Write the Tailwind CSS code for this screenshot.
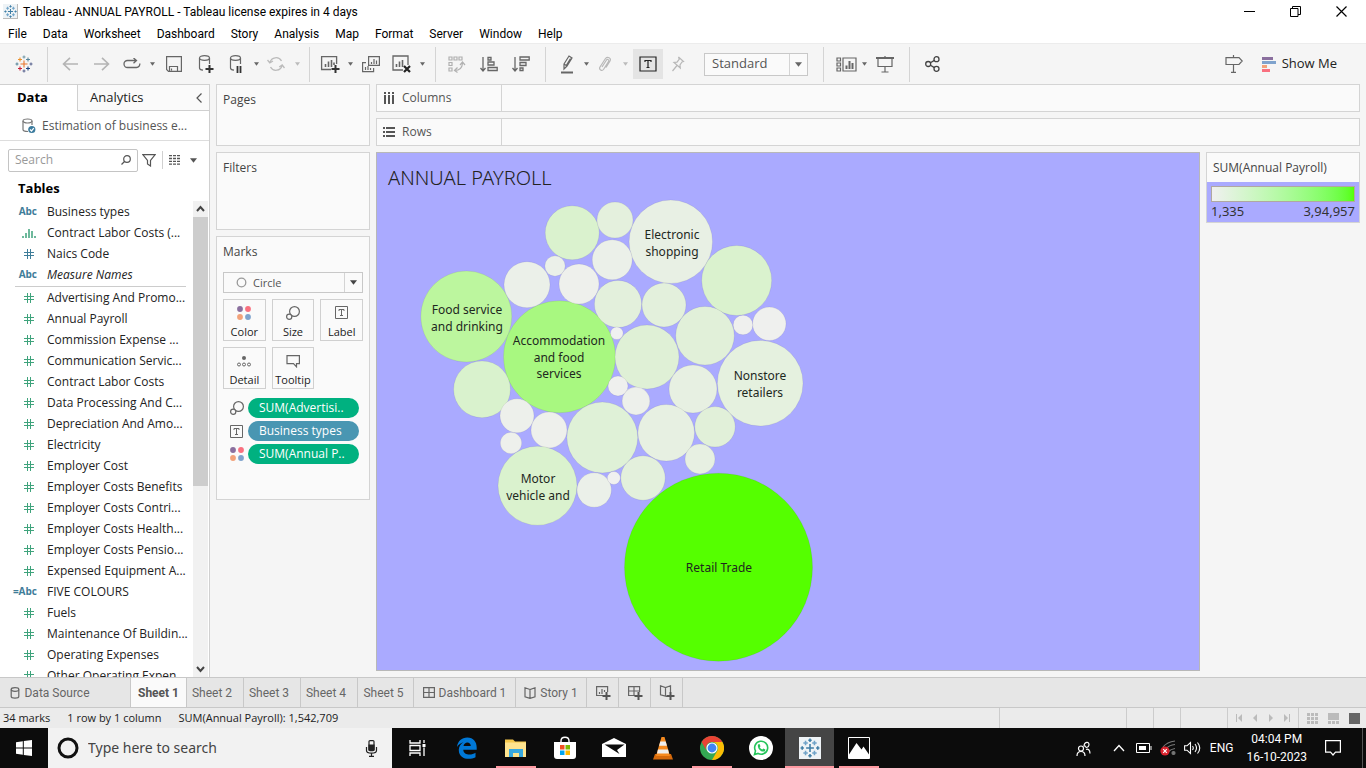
<!DOCTYPE html>
<html lang="en">
<head>
<meta charset="utf-8">
<title>Tableau - ANNUAL PAYROLL</title>
<script src="https://cdn.jsdelivr.net/npm/@tailwindcss/browser@4"></script>
</head>
<body class="flex h-screen flex-col overflow-hidden bg-[#f5f5f5] font-['Open_Sans',sans-serif] text-xs text-[#333]">

<svg class="hidden" aria-hidden="true">
  <symbol id="caret" viewBox="0 0 6 4"><path d="M0 0h6L3 4z" fill="currentColor"/></symbol>
  <symbol id="cross" viewBox="0 0 18 18"><g fill="none" stroke-width="1.1">
    <path stroke="#e8762c" d="M9 5.5v7M5.5 9h7"/><path stroke="#eb912b" d="M5 2.5v4M3 4.5h4"/><path stroke="#59879b" d="M13 2.5v4M11 4.5h4"/><path stroke="#c72037" d="M5 11.5v4M3 13.5h4"/><path stroke="#1f447e" d="M13 11.5v4M11 13.5h4"/><path stroke="#7199a6" d="M9 .5v3M7.5 2h3"/><path stroke="#5b6591" d="M9 14.5v3M7.5 16h3M16 7.5v3M14.5 9h3"/><path stroke="#59879b" d="M2 7.5v3M.5 9h3"/></g></symbol>
  <symbol id="crossblue" viewBox="0 0 18 18"><g fill="none" stroke="#3f7ea6" stroke-width="1.4">
    <path d="M9 5.5v7M5.5 9h7"/><path stroke="#6fa3c8" d="M5 2.5v4M3 4.5h4M13 2.5v4M11 4.5h4M5 11.5v4M3 13.5h4M13 11.5v4M11 13.5h4"/><path d="M9 .5v3M7.5 2h3M9 14.5v3M7.5 16h3M16 7.5v3M14.5 9h3M2 7.5v3M.5 9h3"/></g></symbol>
  <symbol id="dots4" viewBox="0 0 14 14"><circle cx="3" cy="3" r="2.9" fill="#8a6f9e"/><circle cx="11" cy="3" r="2.9" fill="#f9707f"/><circle cx="3" cy="11" r="2.9" fill="#f2a27a"/><circle cx="11" cy="11" r="2.9" fill="#7fa3cd"/></symbol>
  <symbol id="size" viewBox="0 0 14 14"><g fill="none" stroke="#666" stroke-width="1.2"><circle cx="8.5" cy="5.5" r="4.9"/><circle cx="3.2" cy="10.8" r="2.6" fill="#fafafa"/></g></symbol>
  <symbol id="label" viewBox="0 0 13 13"><path fill="none" stroke="#666" d="M.5.5h12v12H.5zM4 5V3.500h5V5M6.500 3.500v6M5 9.500h3"/></symbol>
  <symbol id="hash" viewBox="0 0 10 10"><path fill="none" stroke="currentColor" d="M3.500 0v10M6.500 0v10M0 3.500h10M0 6.500h10"/></symbol>
  <symbol id="bars" viewBox="0 0 14 10"><path fill="none" stroke="currentColor" stroke-width="1.5" d="M1 8v2M4 5v5M7 1v9M10 3v7M13 8v2"/></symbol>
</svg>

<header class="shrink-0 bg-white font-[Roboto,sans-serif] text-xs text-black">
  <div class="flex h-[23px] items-center pl-[3px]">
    <span class="flex h-[15px] w-[15px] items-center justify-center border-r border-b border-[#bbb] bg-[#eef3f6]"><svg class="size-[13px]"><use href="#crossblue"/></svg></span>
    <h1 class="ml-[5px]">Tableau - ANNUAL PAYROLL - Tableau license expires in 4 days</h1>
    <div class="ml-auto flex pr-[2px]">
      <button aria-label="Minimize" class="flex h-5 w-[46px] items-center justify-center"><svg width="11" height="11" stroke="#000"><path d="M0 5.500h11"/></svg></button>
      <button aria-label="Restore" class="flex h-5 w-[46px] items-center justify-center"><svg width="11" height="11" fill="none" stroke="#000"><path d="M.5 2.500h7.500v8H.5zM2.500 2.500v-2h8v8H8"/></svg></button>
      <button aria-label="Close" class="flex h-5 w-[46px] items-center justify-center"><svg width="11" height="11" stroke="#000" stroke-width="1.200"><path d="M.5.5l10 10M10.500.5l-10 10"/></svg></button>
    </div>
  </div>
  <nav class="flex h-5 items-center gap-4 pt-[2px] pl-2">
    <button>File</button><button>Data</button><button>Worksheet</button><button>Dashboard</button><button>Story</button><button>Analysis</button><button>Map</button><button>Format</button><button>Server</button><button>Window</button><button>Help</button>
  </nav>
</header>

<div class="flex h-[41px] shrink-0 items-center border-t border-[#ececec] text-[#666] [&>button]:flex [&>button]:h-[30px] [&>button]:items-center [&>button]:justify-center [&>button]:shrink-0 [&>i]:h-[35px] [&>i]:w-px [&>i]:shrink-0 [&>i]:bg-[#d4d4d4]">
  <button aria-label="Start page" class="w-[47px]"><svg class="size-[18px]"><use href="#cross"/></svg></button><i></i>
  <button aria-label="Undo" class="ml-[6px] w-8 text-[#b4b4b4]"><svg width="16" height="14" fill="none" stroke="currentColor" stroke-width="1.600"><path d="M8 .8L1.500 7 8 13.200M1.500 7H16"/></svg></button>
  <button aria-label="Redo" class="w-8 text-[#b4b4b4]"><svg width="16" height="14" fill="none" stroke="currentColor" stroke-width="1.600"><path d="M8 .8L14.500 7 8 13.200M14.500 7H0"/></svg></button>
  <button aria-label="Replay" class="w-7"><svg width="18" height="12" fill="none" stroke="currentColor" stroke-width="1.300"><path d="M13 2.500H4.500a3.500 3.500 0 0 0 0 7h9a3.500 3.500 0 0 0 3.300-4M10.500 0l3 2.500-3 2.800"/></svg></button>
  <button aria-label="Replay options" class="w-3"><svg width="5" height="4"><use href="#caret"/></svg></button>
  <button aria-label="Save" class="w-8"><svg width="16" height="16" fill="none" stroke="currentColor" stroke-width="1.200"><path d="M.6.6h14.800v14.800H2.500L.6 13.500zM3.500 15v-4.500h8V15M5.500 12.500v2"/></svg></button>
  <button aria-label="New data source" class="w-8"><svg width="16" height="18" fill="none" stroke="currentColor" stroke-width="1.200"><ellipse cx="6.500" cy="3" rx="5" ry="2.300"/><path d="M1.500 3v10c0 1.200 1.500 2 3.500 2.200M11.500 3v6"/><path stroke="#333" stroke-width="2" d="M11.500 10v8M7.500 14h8"/></svg></button>
  <button aria-label="Pause auto updates" class="w-7"><svg width="16" height="18" fill="none" stroke="currentColor" stroke-width="1.200"><ellipse cx="7.500" cy="3" rx="5" ry="2.300"/><path d="M2.500 3v10c0 1.200 1.500 2 3.500 2.200M12.500 3v6"/><path stroke="#333" stroke-width="1.800" d="M9.500 11v7M12.500 11v7"/></svg></button>
  <button aria-label="Update options" class="w-3"><svg width="5" height="4"><use href="#caret"/></svg></button>
  <button aria-label="Run update" class="w-7 text-[#bbb]"><svg width="18" height="16" fill="none" stroke="currentColor" stroke-width="1.300"><path d="M3 6.500a6.200 6.200 0 0 1 11.500-1.500M15 9.500A6.200 6.200 0 0 1 3.500 11M.5 4l2.300 3L6 5M17.500 12l-2.300-3-3 2"/></svg></button>
  <button aria-label="Run options" class="w-[14px] text-[#bbb]"><svg width="5" height="4"><use href="#caret"/></svg></button><i class="ml-[5px]"></i>
  <button aria-label="New worksheet" class="ml-[6px] w-7"><svg width="20" height="18" fill="none" stroke="currentColor" stroke-width="1.300"><path d="M11 14.500H1.600V1.600h15V9"/><path stroke-width="1.600" d="M5.500 12V9M8.500 12V6.500M11.500 12V5M14 10V7.500"/><path stroke="#333" stroke-width="2" d="M15.500 10v8M11.500 14h8"/></svg></button>
  <button aria-label="New options" class="w-3"><svg width="5" height="4"><use href="#caret"/></svg></button>
  <button aria-label="Duplicate" class="w-[30px]"><svg width="18" height="17" fill="none" stroke="currentColor" stroke-width="1.200"><path d="M6.600.6h10.800v8.800H6.600zM4 6.600H.6v9h11V12"/><path d="M9.500 8V6M12 8V3M14.500 8V4.500M3.500 14v-3M6 14v-4M8.500 14v-2"/></svg></button>
  <button aria-label="Clear sheet" class="w-[30px]"><svg width="19" height="18" fill="none" stroke="currentColor" stroke-width="1.300"><path d="M11 15H1V1h15v9"/><path stroke-width="1.600" d="M4.500 12V9M7.500 12V6.500M10.500 12V5"/><path stroke="#222" stroke-width="2.200" d="M12 11l6 6M18 11l-6 6"/></svg></button>
  <button aria-label="Clear options" class="w-3"><svg width="5" height="4"><use href="#caret"/></svg></button><i class="ml-[7px]"></i>
  <button aria-label="Swap rows and columns" class="ml-[5px] w-8 text-[#b0b0b0]"><svg width="18" height="17" fill="none" stroke="currentColor" stroke-width="1.200"><path d="M1 1h3v3H1zM6 1h3v3H6zM11 1h3v3h-3zM1 6.500h3v3H1zM1 12h3v3H1zM7 14.500c4 0 7-2.500 7.500-7M9.500 11.500l-3 3 3 2M12 9l2.500-3L17 9"/></svg></button>
  <button aria-label="Sort ascending" class="w-8"><svg width="18" height="16" fill="none" stroke="currentColor" stroke-width="1.300"><path d="M3 1v14M.5 12L3 15l2.500-3M8 1.500h3v2.500H8zM8 6h6v3H8zM8 11.500h9.200v3H8z"/></svg></button>
  <button aria-label="Sort descending" class="w-8"><svg width="18" height="16" fill="none" stroke="currentColor" stroke-width="1.300"><path d="M3 1v14M.5 12L3 15l2.500-3M8 1h9.200v3H8zM8 6.500h6v3H8zM8 12h3v2.500H8z"/></svg></button><i class="ml-2"></i>
  <button aria-label="Highlight" class="ml-2 w-[26px]"><svg width="14" height="19" fill="none" stroke="currentColor" stroke-width="1.200"><path d="M4 9L9 1l3 2-5 8-3 3zM4 9l3 2M10.500 3.500l-4 6.500"/><path stroke-width="2" d="M1 17.500h12"/></svg></button>
  <button aria-label="Highlight options" class="w-3"><svg width="5" height="4"><use href="#caret"/></svg></button>
  <button aria-label="Group members" class="w-[26px] text-[#b8b8b8]"><svg width="14" height="17" fill="none" stroke="currentColor" stroke-width="1.200"><path d="M4 11l4.500-7c1-1.500 3 0 2 1.500L5.500 13.500c-1.500 2-5 0-3.500-2.500L7.500 2.500c2-2.500 6-.5 4.500 2.500L8 11.500"/></svg></button>
  <button aria-label="Group options" class="w-[14px] text-[#bbb]"><svg width="5" height="4"><use href="#caret"/></svg></button>
  <button aria-label="Show mark labels" class="ml-px w-[30px] bg-[#e4e4e4] text-[#222]"><svg width="18" height="16" fill="none" stroke="currentColor" stroke-width="1.200"><path d="M1 1h16v14H1zM6 6V4.500h6V6M9 4.500v7M7.500 11.500h3"/></svg></button>
  <button aria-label="Fix axes" class="w-[30px] text-[#b8b8b8]"><svg width="14" height="16" fill="none" stroke="currentColor" stroke-width="1.200"><path d="M7.500 1l5 4.500-1.500.5-2 3 .3 3L3 6.500l3-.3 2.300-3zM6 9.500L1.500 15"/></svg></button>
  <div class="relative ml-[11px] h-[23px] w-[104px] shrink-0 border border-[#c8c8c8] bg-[#fafafa]">
    <select aria-label="Fit" class="h-full w-full appearance-none pl-[7px] text-[13px] text-[#555]"><option>Standard</option></select>
    <span class="pointer-events-none absolute inset-y-0 right-0 flex w-[18px] items-center justify-center border-l border-[#d4d4d4]"><svg width="7" height="5"><use href="#caret"/></svg></span>
  </div><i class="ml-[15px]"></i>
  <button aria-label="Show cards" class="ml-[9px] w-[26px]"><svg width="21" height="15" fill="none" stroke="currentColor" stroke-width="1.200"><path d="M1 1h3.500v3H1zM1 6h3.500v3H1zM1 11h3.500v3H1zM7 1h13v13H7z"/><path stroke-width="2" d="M10.500 12V8.500M13.500 12V4M16.500 12V6"/></svg></button>
  <button aria-label="Card options" class="w-[10px]"><svg width="5" height="4"><use href="#caret"/></svg></button>
  <button aria-label="Presentation mode" class="w-8"><svg width="18" height="17" fill="none" stroke="currentColor" stroke-width="1.200"><path stroke-width="2" d="M0 2h18"/><path d="M2 2v8.500h14V2M9 10.500V16M5.500 16h7M9 0v2"/></svg></button><i class="ml-2"></i>
  <button aria-label="Share" class="ml-[6px] w-8 text-[#444]"><svg width="15" height="16" fill="none" stroke="currentColor" stroke-width="1.300"><circle cx="3.200" cy="8" r="2.500"/><circle cx="11.500" cy="3.200" r="2.500"/><circle cx="11.500" cy="12.800" r="2.500"/><path d="M5.400 6.700l4-2.300M5.400 9.300l4 2.300"/></svg></button>
  <button aria-label="Guide" class="ml-auto w-6"><svg width="18" height="18" fill="none" stroke="currentColor" stroke-width="1.200"><path d="M1 2.600h13l3.200 3.400-3.200 3.500H1zM8.500 0v2.500M8.500 9.500V17M6 17.300h5"/></svg></button>
  <button class="mr-[29px] ml-4 gap-[6px] text-[13px] text-[#222]"><svg width="14" height="15"><path fill="#8a6f9e" d="M0 0h11v3H0z"/><path fill="#7fa3cd" d="M0 4h14v3H0z"/><path fill="#f2a27a" d="M0 8h5v3H0z"/><path fill="#f9707f" d="M0 12h8v3H0z"/></svg>Show Me</button>
</div>

<main class="flex min-h-0 flex-1">
  <aside class="flex w-[210px] shrink-0 flex-col border-t border-r border-[#d0d0d0] bg-white">
    <div class="flex h-[26px] shrink-0 text-[13px] text-black">
      <button class="w-[77px] pr-3 font-bold">Data</button>
      <div class="flex flex-1 items-center justify-between border-b border-l border-[#d0d0d0] bg-[#fafafa] pr-[7px] pl-3 text-[#222]"><button>Analytics</button><button aria-label="Collapse pane"><svg width="6" height="10" fill="none" stroke="#555" stroke-width="1.200"><path d="M5.500.5L1 5l4.500 4.500"/></svg></button></div>
    </div>
    <div class="flex h-[30px] shrink-0 items-center border-b border-[#ddd] pl-[22px] text-[#555]">
      <svg width="14" height="16" fill="none" stroke="#777" stroke-width="1.200"><ellipse cx="5.500" cy="3" rx="4.500" ry="2"/><path d="M1 3v8.500C1 13 3 13.500 6 13.500M10 3v4"/><circle cx="9.800" cy="11.500" r="3.600" fill="#3b7b9e" stroke="none"/><path stroke="#fff" d="M8 11.500l1.500 1.500 2.300-2.800"/></svg>
      <span class="ml-[6px]">Estimation of business e...</span>
    </div>
    <div class="mt-[7px] flex h-6 shrink-0 items-center pl-2">
      <div class="flex h-[23px] w-[130px] items-center rounded-xs border border-[#c4c4c4] pr-[6px] pl-[6px]">
        <input aria-label="Search" placeholder="Search" class="w-0 flex-1 placeholder:text-[#999]"><svg width="10" height="10" fill="none" stroke="#555" stroke-width="1.200"><circle cx="6" cy="4" r="3.300"/><path d="M3.500 6.500L.5 9.500"/></svg>
      </div>
      <button aria-label="Filter" class="ml-1"><svg width="14" height="13" fill="none" stroke="#555" stroke-width="1.200"><path d="M.8.6h12.400L8.500 6.500V12l-3-2V6.500z"/></svg></button>
      <span class="mx-[6px] h-[18px] w-px bg-[#d0d0d0]"></span>
      <button aria-label="View options" class="flex items-center gap-[9px]"><svg width="12" height="10" stroke="#555" stroke-width="1.300" stroke-dasharray="3 1"><path d="M0 .7h12M0 3.500h12M0 6.300h12M0 9.100h12"/></svg><svg class="text-[#555]" width="7" height="5"><use href="#caret"/></svg></button>
    </div>
    <h2 class="mt-[6px] h-[23px] shrink-0 pl-[18px] text-[13px] leading-5 font-bold text-black">Tables</h2>
    <div class="flex min-h-0 flex-1">
      <ul id="fields" class="min-w-0 flex-1 overflow-hidden"></ul>
      <div class="mr-px flex w-[15px] shrink-0 flex-col items-center bg-[#f1f1f1] pb-1">
        <svg class="my-1 shrink-0" width="9" height="8" fill="none" stroke="#444" stroke-width="2"><path d="M1 6l3.500-4L8 6"/></svg>
        <div class="h-[269px] w-full bg-[#cdcdcd]"></div>
        <svg class="mt-auto shrink-0" width="9" height="8" fill="none" stroke="#444" stroke-width="2"><path d="M1 2l3.500 4L8 2"/></svg>
      </div>
    </div>
  </aside>

  <section class="ml-[6px] flex w-[154px] shrink-0 flex-col gap-[6px] text-[#444]">
    <div class="h-[62px] border border-[#d4d4d4] bg-[#fafafa] px-[6px] pt-[7px] leading-4">Pages</div>
    <div class="h-[78px] border border-[#d4d4d4] bg-[#fafafa] px-[6px] pt-[7px] leading-4">Filters</div>
    <div class="h-[264px] border border-[#d4d4d4] bg-[#fafafa] px-[6px] pt-[7px] leading-4">
      Marks
      <div class="relative mt-3 h-[21px] border border-[#c8c8c8]">
        <svg class="pointer-events-none absolute top-1 left-3" width="11" height="11" fill="none" stroke="#999" stroke-width="1.300"><circle cx="5.500" cy="5.500" r="4.300"/></svg>
        <select aria-label="Mark type" class="block h-full w-full appearance-none pl-[29px] text-[11px] text-[#555]"><option>Circle</option></select>
        <span class="pointer-events-none absolute inset-y-0 right-0 flex w-[18px] items-center justify-center border-l border-[#d4d4d4]"><svg width="7" height="5"><use href="#caret"/></svg></span>
      </div>
      <div class="mt-[6px] grid grid-cols-3 gap-[6px] text-[11px] text-[#222] [&>button]:flex [&>button]:h-[42px] [&>button]:flex-col [&>button]:items-center [&>button]:justify-between [&>button]:border [&>button]:border-[#d0d0d0] [&>button]:pt-[6px]">
        <button><svg width="14" height="14"><use href="#dots4"/></svg>Color</button>
        <button><svg width="14" height="14"><use href="#size"/></svg>Size</button>
        <button><svg width="13" height="13"><use href="#label"/></svg>Label</button>
        <button><svg width="14" height="14" fill="none" stroke="#666"><circle cx="7" cy="4" r="2" fill="#666" stroke="none"/><circle cx="2" cy="10.500" r="1.500"/><circle cx="7" cy="10.500" r="1.500"/><circle cx="12" cy="10.500" r="1.500"/></svg>Detail</button>
        <button><svg width="14" height="14" fill="none" stroke="#666" stroke-width="1.200"><path d="M1 1.600h12.400v8H10.500v3.200L7.500 9.600H1z"/></svg>Tooltip</button>
      </div>
      <div class="mt-[9px] grid grid-cols-[14px_111px] items-center gap-x-1 gap-y-[3px] pl-[7px] text-white [&>button]:h-5 [&>button]:rounded-full [&>button]:pl-[11px] [&>button]:text-left">
        <svg width="14" height="14"><use href="#size"/></svg><button class="bg-[#00b180]">SUM(Advertisi..</button>
        <svg width="13" height="13"><use href="#label"/></svg><button class="bg-[#4996b2]">Business types</button>
        <svg width="14" height="14"><use href="#dots4"/></svg><button class="bg-[#00b180]">SUM(Annual P..</button>
      </div>
    </div>
  </section>

  <section class="mr-[6px] ml-[6px] flex min-w-0 flex-1 flex-col gap-[6px] pb-[6px]">
    <div class="flex h-7 shrink-0 border border-[#d4d4d4] bg-[#fafafa]"><div class="flex w-[125px] items-center gap-[7px] border-r border-[#d4d4d4] pl-[7px] text-[#555]"><svg width="11" height="12"><path fill="#555" d="M0 0h2v2H0zM4 0h2v2H4zM8 0h2v2H8zM0 3h2v9H0zM4 3h2v9H4zM8 3h2v9H8z"/></svg>Columns</div></div>
    <div class="flex h-7 shrink-0 border border-[#d4d4d4] bg-[#fafafa]"><div class="flex w-[125px] items-center gap-[7px] border-r border-[#d4d4d4] pl-[6px] text-[#555]"><svg width="12" height="10"><path fill="#555" d="M0 0h2v2H0zM0 4h2v2H0zM0 8h2v2H0zM3 0h9v2H3zM3 4h9v2H3zM3 8h9v2H3z"/></svg>Rows</div></div>
    <div class="flex min-h-0 flex-1 gap-[6px]">
      <div class="relative min-w-0 flex-1 border border-[#b8b8b8] bg-[#aaaaff] font-['Noto_Sans',sans-serif]">
        <h2 class="pt-[11px] pl-[11px] text-xl leading-7 font-light text-[#222]">ANNUAL PAYROLL</h2>
        <svg class="absolute inset-0 h-full w-full" viewBox="377 153 822 517" preserveAspectRatio="xMinYMin meet" role="img" aria-label="Packed bubbles of annual payroll by business type">
          <g id="bubbles" stroke="#00000010" stroke-width="1"></g>
          <g text-anchor="middle" font-size="12" fill="#1e281e">
            <text x="672" y="239">Electronic</text><text x="672" y="256">shopping</text>
            <text x="467" y="314">Food service</text><text x="467" y="331">and drinking</text>
            <text x="559" y="345">Accommodation</text><text x="559" y="362">and food</text><text x="559" y="378">services</text>
            <text x="760" y="380">Nonstore</text><text x="760" y="397">retailers</text>
            <text x="538" y="483">Motor</text><text x="538" y="500">vehicle and</text>
            <text x="719" y="572">Retail Trade</text>
          </g>
        </svg>
      </div>
      <aside class="h-[71px] w-[154px] shrink-0 border border-[#d4d4d4] bg-[#aaaaff]">
        <div class="h-[29px] bg-[#fafafa] pt-[7px] pl-[6px] leading-4 text-[#444]">SUM(Annual Payroll)</div>
        <div class="mx-1 mt-[4px] h-4 border border-[#b0a8a0] bg-linear-to-r from-[#f0f0f0] to-[#55ff00]"></div>
        <div class="flex justify-between px-1 font-['Noto_Sans',sans-serif] text-[13px] leading-[19px] text-[#333]"><span>1,335</span><span>3,94,957</span></div>
      </aside>
    </div>
  </section>
</main>

<nav class="flex h-[31px] shrink-0 border-y border-[#c8c8c8] bg-[#e6e6e6] font-[Roboto,sans-serif] text-xs text-[#666] [&>button]:flex [&>button]:shrink-0 [&>button]:items-center [&>button]:justify-center [&>button]:gap-1 [&>button]:border-r [&>button]:border-[#c8c8c8]">
  <button class="w-[131px] pr-[30px]"><svg width="10" height="12" fill="none" stroke="#666" stroke-width="1.200"><ellipse cx="5" cy="2.500" rx="3.800" ry="1.800"/><path d="M1.200 2.500v7c0 2.200 7.600 2.200 7.600 0v-7"/></svg>Data Source</button>
  <button class="w-[56px] bg-[#fafafa] font-bold text-[#555]">Sheet 1</button>
  <button class="w-[57px] pr-[6px]">Sheet 2</button><button class="w-[57px] pr-[6px]">Sheet 3</button><button class="w-[57px] pr-[6px]">Sheet 4</button><button class="w-[56px] pr-1">Sheet 5</button>
  <button class="w-[102px]"><svg width="12" height="11" fill="none" stroke="#666" stroke-width="1.200"><path d="M.6.6h10.800v9.800H.6zM6 .6v9.800M.6 5.500h10.800"/></svg>Dashboard 1</button>
  <button class="w-[71px]"><svg width="12" height="12" fill="none" stroke="#666" stroke-width="1.200"><path d="M6 2.500L1 .8v9l5 1.600 5-1.600v-9zM6 2.500v9"/></svg>Story 1</button>
  <button class="w-8" aria-label="New Worksheet"><svg width="16" height="15" fill="none" stroke="#666" stroke-width="1.200"><path d="M8 10.500H1.600V1.600h11V7M4.500 9V7M7 9V4M9.500 7V5"/><path stroke="#555" stroke-width="2" d="M11.500 7v8M7.500 11h8"/></svg></button>
  <button class="w-8" aria-label="New Dashboard"><svg width="16" height="15" fill="none" stroke="#666" stroke-width="1.200"><path d="M8 10.500H1.600V1.600h11V7M7 1.600v9M1.600 6h11"/><path stroke="#555" stroke-width="2" d="M11.500 7v8M7.500 11h8"/></svg></button>
  <button class="w-8" aria-label="New Story"><svg width="16" height="15" fill="none" stroke="#666" stroke-width="1.200"><path d="M8 11.500L6.500 11.200 1.500 9.800v-9L6.500 2.500l5-1.700V7M6.500 2.500v8.500"/><path stroke="#555" stroke-width="2" d="M11.500 7v8M7.500 11h8"/></svg></button>
</nav>

<footer class="flex h-5 shrink-0 items-center bg-[#ebebeb] pl-[3px] text-[11px] text-[#222] [&>i]:h-full [&>i]:border-l [&>i]:border-[#ccc]">
  <span>34 marks</span><span class="ml-[17px]">1 row by 1 column</span><span class="ml-[17px]">SUM(Annual Payroll): 1,542,709</span>
  <i class="ml-auto w-[127px]"></i><i class="w-[27px]"></i><i class="w-[27px]"></i><i class="w-[47px]"></i>
  <div class="flex h-full w-[71px] items-center justify-between border-l border-[#ccc] pr-2 pl-2 text-[#bbb]">
    <button aria-label="First"><svg width="7" height="8" fill="currentColor"><path d="M0 0h1v8H0zM6 0v8L2 4z"/></svg></button><button aria-label="Previous"><svg width="5" height="8" fill="currentColor"><path d="M4 0v8L0 4z"/></svg></button><button aria-label="Next"><svg width="5" height="8" fill="currentColor"><path d="M1 0v8l4-4z"/></svg></button><button aria-label="Last"><svg width="7" height="8" fill="currentColor"><path d="M6 0h1v8H6zM1 0v8l4-4z"/></svg></button>
  </div>
  <div class="flex h-full items-center gap-[10px] border-l border-[#ccc] pr-[6px] pl-2 text-[#bbb]">
    <button aria-label="Sheet sorter"><svg width="11" height="11" fill="currentColor"><path d="M0 0h3v3H0zM4 0h3v3H4zM8 0h3v3H8zM0 4h3v3H0zM4 4h3v3H4zM8 4h3v3H8zM0 8h3v3H0zM4 8h3v3H4zM8 8h3v3H8z"/></svg></button>
    <button aria-label="Filmstrip"><svg width="11" height="11" fill="currentColor"><path d="M0 0h11v7H0zM0 8h3v3H0zM4 8h3v3H4zM8 8h3v3H8z"/></svg></button>
    <button aria-label="Tabs"><svg width="11" height="11"><path fill="#666" d="M0 0h11v11H0z"/></svg></button>
  </div>
</footer>

<div class="flex h-10 shrink-0 bg-[#0c0c0c] font-['Noto_Sans',sans-serif] text-white">
  <button aria-label="Start" class="flex w-12 items-center justify-center"><svg width="16" height="16" fill="#fff"><path d="M0 2.200L6.800 1.200v6.300H0zM7.800 1L16 0v7.500H7.800zM0 8.500h6.800v6.300L0 13.800zM7.800 8.500H16V16l-8.200-1z"/></svg></button>
  <div class="flex w-[344px] items-center bg-[#f2f2f2] pr-[14px] pl-[9px]">
    <svg width="22" height="22" fill="none" stroke="#111" stroke-width="3"><circle cx="11" cy="11" r="9"/></svg>
    <input aria-label="Type here to search" placeholder="Type here to search" class="ml-[9px] w-0 flex-1 text-sm placeholder:text-[#444]">
    <svg width="13" height="17" fill="none" stroke="#222" stroke-width="1.200"><rect x="4" y=".6" width="5" height="10" rx="1"/><path fill="#222" d="M4 5h5v5H4z"/><path fill="none" d="M1.500 7v3.500c0 3.500 10 3.500 10 0V7M6.500 13v3M4 16.400h5"/></svg>
  </div>
  <div class="ml-px flex [&>button]:relative [&>button]:flex [&>button]:w-[49px] [&>button]:items-center [&>button]:justify-center">
    <button aria-label="Task View"><svg width="17" height="16" fill="none" stroke="#fff" stroke-width="1.300"><path d="M1 0v3h10V0M1 5.500h10v5H1zM1 16v-3h10v3M15 0v3M15 7.500V16"/><path fill="#fff" stroke="none" d="M13.500 4h3v3h-3z"/></svg></button>
    <button aria-label="Edge"><svg width="20" height="22" viewBox="0 0 20 22"><path fill="#0078d7" d="M0 10C.8 4 4.800.5 10.300.5 16.500.5 19.700 5 19.700 10.500v2.300H6.300c.2 5.500 8 6 12.200 3v4.400C12 23.500 1.500 22 1.800 12.500c.2-3.200 2-5.800 4.700-7.200C3.800 6 1.500 7.500 0 10zm6.500-.9h7.300c0-4.800-6.500-5-7.300 0z"/></svg></button>
    <button aria-label="File Explorer"><svg width="22" height="20"><path fill="#f5c84c" d="M0 1.500h8l2 2h11V18H0z"/><path fill="#ffe48f" d="M0 4.500h21V19H0z"/><path fill="#38a9e0" d="M4 11h14v8h-4v-4H8v4H4z"/></svg><span class="absolute bottom-0 h-[2px] w-10 bg-[#ff9aa2]"></span></button>
    <button aria-label="Store"><svg width="22" height="24"><path fill="none" stroke="#fff" stroke-width="1.400" d="M7 8V5c0-5 8-5 8 0v3"/><path fill="#fff" d="M0 6h22v14q0 3-3 3H3q-3 0-3-3z"/><path fill="#f25022" d="M6 9h4.500v4.500H6z"/><path fill="#7fba00" d="M11.500 9H16v4.500h-4.500z"/><path fill="#00a4ef" d="M6 14.500h4.500V19H6z"/><path fill="#ffb900" d="M11.500 14.500H16V19h-4.500z"/></svg></button>
    <button aria-label="Mail"><svg width="24" height="20"><path fill="#fff" d="M0 6L12 0l12 6v13H0z"/><path fill="#0c0c0c" d="M2.500 6.500h20L15 12l2.500 4z"/></svg></button>
    <button aria-label="VLC"><svg width="20" height="23"><path fill="#d66a0c" d="M2 17h16l2 5.500H0z"/><path fill="#f58a1f" d="M8.500 0h3L17 19H3z"/><path fill="#eee" d="M7.300 4.500h5.400l1.200 4.300H6.100zM5 12.500h10l1 4H4z"/></svg></button>
    <button aria-label="Chrome"><svg width="24" height="24" viewBox="0 0 24 24"><circle cx="12" cy="12" r="12" fill="#34a853"/><path fill="#ea4335" d="M1.600 6A12 12 0 0 1 22.400 6H12a6 6 0 0 0-5.200 9z"/><path fill="#fbbc05" d="M22.400 6A12 12 0 0 1 12 24l5.200-9A6 6 0 0 0 12 6z"/><circle cx="12" cy="12" r="5.600" fill="#fff"/><circle cx="12" cy="12" r="4.400" fill="#4285f4"/></svg><span class="absolute bottom-0 h-[2px] w-10 bg-[#ff9aa2]"></span></button>
    <button aria-label="WhatsApp"><svg width="24" height="24" viewBox="0 0 24 24"><circle cx="12" cy="12" r="12" fill="#fff"/><path fill="none" stroke="#25c45b" stroke-width="1.600" d="M5.500 18.500l1-3.600a6.500 6.500 0 1 1 2.500 2.500z"/><path fill="#25c45b" d="M9 8.500l1.500-.5 1 2.200-.8 1q1 1.800 2.700 2.400l1-1 2 1-.4 1.600C12.500 17 8 12.500 9 8.500z"/></svg></button>
    <button aria-label="Tableau" class="bg-[#454545]"><span class="flex size-[22px] items-center justify-center bg-[#eef3f6]"><svg width="20" height="20"><use href="#crossblue"/></svg></span><span class="absolute bottom-0 h-[2px] w-full bg-[#ff9aa2]"></span></button>
    <button aria-label="Photos"><svg width="22" height="22"><path fill="none" stroke="#fff" d="M.5.5h21v21H.5z"/><path fill="#fff" d="M1 17.500L8.500 6l5 6.500 2-3 5.500 8V21H1z"/></svg><span class="absolute bottom-0 h-[2px] w-10 bg-[#ff9aa2]"></span></button>
  </div>
  <div class="ml-auto flex items-center font-[Roboto,sans-serif] text-xs">
    <svg width="15" height="15" fill="none" stroke="#fff" stroke-width="1.200"><circle cx="5" cy="7.500" r="2.500"/><path d="M1 15c0-6 8-6 8 0M8 5.500C8 .5 13.500 0 13 4c-.5 3-4 3-4 .500M10 8.500c2-1 4 .500 4 4"/></svg>
    <svg class="ml-[22px]" width="12" height="8" fill="none" stroke="#fff" stroke-width="1.300"><path d="M1 7l5-5.500L11 7"/></svg>
    <svg class="ml-[11px]" width="16" height="10" fill="none" stroke="#fff"><path d="M.5.5h13v9H.5zM15 3v4"/><path fill="#fff" stroke="none" d="M3 3h7v4H3z"/></svg>
    <svg class="ml-[8px]" width="16" height="16" fill="none" stroke="#777" stroke-width="1.200"><path d="M3 7Q7 2 15 1M6 9q3-4 9-4.500M8 12q3-3 7-3.500"/><circle cx="13.500" cy="13" r="1.500" fill="#777"/><circle cx="5" cy="11" r="4.600" fill="#d9232e" stroke="none"/><path stroke="#fff" d="M3.200 9.200l3.600 3.600M6.800 9.200l-3.600 3.600"/></svg>
    <svg class="ml-2" width="17" height="14" fill="none" stroke="#fff" stroke-width="1.100"><path d="M.6 4.800H3L6.500 1.500v11L3 9.200H.6zM8.500 5q1.500 2 0 4M11 3q3 4 0 8M13.500 1.500q4.500 5.500 0 11"/></svg>
    <span class="ml-[9px]">ENG</span>
    <time class="ml-[13px] text-center leading-[18px]">04:04 PM<br>16-10-2023</time>
    <button aria-label="Notifications" class="ml-[18px]"><svg width="16" height="16" fill="none" stroke="#fff" stroke-width="1.200"><path d="M.6.6h14.800v11.500H10.500L8 15l-2.500-2.900H.6z"/></svg></button>
    <span class="mr-[3px] ml-[21px] h-10 w-px bg-[#555]"></span>
  </div>
</div>

<script>
const icons = {
  abc: '<span class="text-[10px] font-bold text-[#3f7d99]">Abc</span>',
  calc: '<span class="text-[10px] font-bold text-[#3f7d99]">=Abc</span>',
  bins: '<svg class="text-[#3fa37c]" width="14" height="10"><use href="#bars"/></svg>',
  dim: '<svg class="text-[#3f7d99]" width="10" height="10"><use href="#hash"/></svg>',
  num: '<svg class="text-[#3fa37c]" width="10" height="10"><use href="#hash"/></svg>',
};
const fields = [
  ['abc', 'Business types'], ['bins', 'Contract Labor Costs (...'], ['dim', 'Naics Code'], ['abc', 'Measure Names'], null,
  ['num', 'Advertising And Promo...'], ['num', 'Annual Payroll'], ['num', 'Commission Expense ...'], ['num', 'Communication Servic...'],
  ['num', 'Contract Labor Costs'], ['num', 'Data Processing And C...'], ['num', 'Depreciation And Amo...'], ['num', 'Electricity'],
  ['num', 'Employer Cost'], ['num', 'Employer Costs Benefits'], ['num', 'Employer Costs Contri...'], ['num', 'Employer Costs Health...'],
  ['num', 'Employer Costs Pensio...'], ['num', 'Expensed Equipment A...'], ['calc', 'FIVE COLOURS'], ['num', 'Fuels'],
  ['num', 'Maintenance Of Buildin...'], ['num', 'Operating Expenses'], ['num', 'Other Operating Expen...'],
];
document.getElementById('fields').innerHTML = fields.map(f => f
  ? `<li class="flex h-[21px] items-center whitespace-nowrap text-[#222]"><span class="flex w-[37px] shrink-0 justify-end ${f[0] === 'abc' || f[0] === 'calc' ? '' : f[0] === 'bins' ? 'pr-px' : 'pr-[3px]'}">${icons[f[0]]}</span><span class="ml-[10px] ${f[1] === 'Measure Names' ? 'italic' : ''}">${f[1]}</span></li>`
  : '<li class="mt-px mr-[7px] ml-[15px] border-t border-[#ccc]"></li>').join('');

const bubbles = [
  [466.3,316.5,45.5,'#bcf69e'],[559.5,356.8,56,'#a8f880'],[670.8,241.7,41.7,'#e8f0e4'],[760.2,383.2,42.8,'#e5f1df'],
  [572.2,232.8,27,'#daf2ce'],[615,220,18,'#e4f0dd'],[612.2,259.8,20,'#ebf0e9'],[555,266,10.2,'#ebf0e9'],
  [527,284.7,23,'#ebf0e9'],[579,284,20,'#eef0ec'],[618,304,23.6,'#e3f0dc'],[664,305,22,'#e3f0dc'],
  [736.7,280.5,35,'#daf2ce'],[769.3,323.8,16.7,'#eff0ee'],[743,325,9.8,'#eff0ee'],[705,335.7,29.3,'#e1f0d9'],
  [616.8,333.2,6.3,'#f0f0f0'],[647,357,32,'#dff0d6'],[693,389,24,'#e7f0e2'],[618,386,10,'#eff0ee'],
  [636,401,13.9,'#edf0eb'],[482,389.3,28.4,'#d9f2cd'],[517,415.8,17,'#edf0eb'],[549,430,18,'#eef0ec'],
  [511,443,10.7,'#eef0ec'],[602.3,437.5,35.4,'#dff1d7'],[666.2,432.8,28.3,'#e7f0e2'],[715,426.8,20.2,'#e1f0d9'],
  [700,459,15,'#e7f0e2'],[537.5,485.7,39.5,'#daf2ce'],[594.2,490,17.2,'#ebf0e9'],[613.8,478,6.5,'#f0f0f0'],
  [643,478,22.2,'#e3f0dc'],[718.5,567.2,94,'#55ff00'],
];
document.getElementById('bubbles').innerHTML = bubbles.map(([x, y, r, c]) => `<circle cx="${x}" cy="${y}" r="${r}" fill="${c}"/>`).join('');
</script>
</body>
</html>
